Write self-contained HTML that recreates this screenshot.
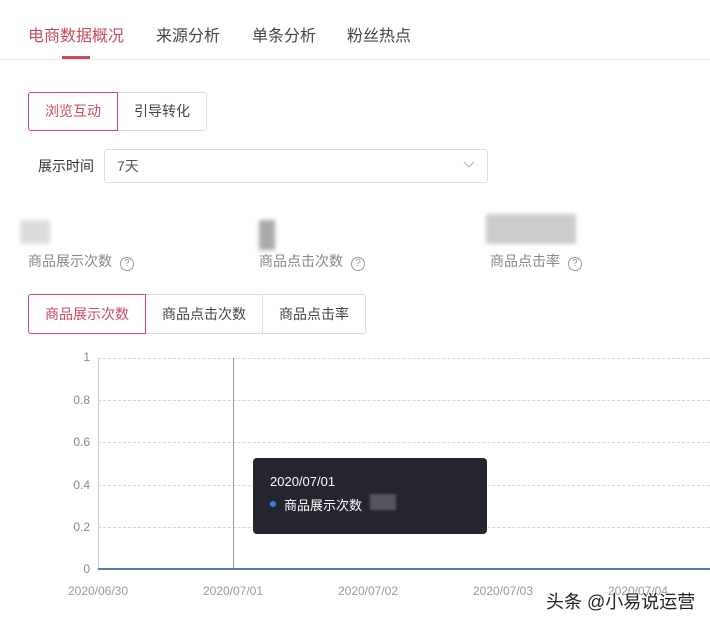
<!DOCTYPE html>
<html><head><meta charset="utf-8"><style>
*{margin:0;padding:0;box-sizing:border-box}
body{width:710px;height:624px;background:#fff;font-family:"Liberation Sans","Noto Sans CJK SC",sans-serif;position:relative;overflow:hidden;color:#333}
.a{position:absolute;white-space:nowrap}
.tab{font-size:16px;color:#444;top:22px}
.g{position:absolute;left:98px;width:612px;border-top:1px dashed #d6d6d6}
.yl{position:absolute;right:620px;font-size:12px;color:#888;text-align:right}
.xl{position:absolute;top:584px;font-size:12px;color:#999;transform:translateX(-50%)}
.q{display:inline-block;width:14px;height:14px;border:1px solid #999;border-radius:50%;font-size:10px;line-height:12px;text-align:center;color:#999;margin-left:8px;vertical-align:0px}
.blur{position:absolute;background:#ccc;filter:blur(2px)}
</style></head><body>
<div class="a tab" style="left:28px;color:#c94a5e">电商数据概况</div>
<div class="a tab" style="left:156px">来源分析</div>
<div class="a tab" style="left:252px">单条分析</div>
<div class="a tab" style="left:347px">粉丝热点</div>
<div class="a" style="left:62px;top:56px;width:28px;height:3px;background:#c94a5e"></div>
<div class="a" style="left:0;top:59px;width:710px;height:1px;background:#e6e6e6"></div>

<div class="a" style="left:28px;top:92px;width:90px;height:39px;border:1px solid #c94a5e;border-radius:3px 0 0 3px;color:#c94a5e;font-size:14px;line-height:37px;text-align:center;z-index:1">浏览互动</div>
<div class="a" style="left:117px;top:92px;width:90px;height:39px;border:1px solid #ddd;border-radius:0 3px 3px 0;font-size:14px;line-height:37px;text-align:center;color:#444">引导转化</div>

<div class="a" style="left:38px;top:156px;font-size:14px;color:#333">展示时间</div>
<div class="a" style="left:104px;top:149px;width:384px;height:34px;border:1px solid #ddd;border-radius:3px;font-size:14px;line-height:32px;padding-left:12px;color:#555">7天</div>
<svg class="a" style="left:463px;top:161px" width="12" height="8"><path d="M1 1l5 5 5-5" fill="none" stroke="#bbb" stroke-width="1.2"/></svg>

<div class="blur" style="left:20px;top:220px;width:30px;height:24px;background:#ddd"></div>
<div class="blur" style="left:259px;top:220px;width:16px;height:30px;background:#aaa"></div>
<div class="blur" style="left:486px;top:214px;width:90px;height:30px;background:#ccc"></div>
<div class="a" style="left:28px;top:251px;font-size:14px;color:#888">商品展示次数<span class="q">?</span></div>
<div class="a" style="left:259px;top:251px;font-size:14px;color:#888">商品点击次数<span class="q">?</span></div>
<div class="a" style="left:490px;top:251px;font-size:14px;color:#888">商品点击率<span class="q">?</span></div>

<div class="a" style="left:28px;top:294px;width:118px;height:40px;border:1px solid #c94a5e;border-radius:3px 0 0 3px;color:#c94a5e;font-size:14px;line-height:38px;text-align:center;z-index:1">商品展示次数</div>
<div class="a" style="left:145px;top:294px;width:118px;height:40px;border:1px solid #ddd;font-size:14px;line-height:38px;text-align:center;color:#444">商品点击次数</div>
<div class="a" style="left:262px;top:294px;width:104px;height:40px;border:1px solid #ddd;border-radius:0 3px 3px 0;font-size:14px;line-height:38px;text-align:center;color:#444">商品点击率</div>

<div class="g" style="top:358px"></div><div class="g" style="top:400px"></div><div class="g" style="top:442px"></div><div class="g" style="top:485px"></div><div class="g" style="top:527px"></div>
<div class="yl" style="top:350px">1</div><div class="yl" style="top:393px">0.8</div><div class="yl" style="top:435px">0.6</div><div class="yl" style="top:478px">0.4</div><div class="yl" style="top:520px">0.2</div><div class="yl" style="top:562px">0</div>
<div class="a" style="left:98px;top:358px;width:1px;height:212px;background:#ccc"></div>
<div class="a" style="left:233px;top:358px;width:1px;height:212px;background:#999"></div>
<div class="a" style="left:98px;top:568px;width:612px;height:2px;background:#4a7fb0"></div>
<div class="xl" style="left:98px">2020/06/30</div><div class="xl" style="left:233px">2020/07/01</div><div class="xl" style="left:368px">2020/07/02</div><div class="xl" style="left:503px">2020/07/03</div><div class="xl" style="left:638px">2020/07/04</div>

<div class="a" style="left:253px;top:458px;width:234px;height:76px;background:#25252f;border-radius:4px"></div>
<div class="a" style="left:270px;top:474px;font-size:13px;color:#fff">2020/07/01</div>
<div class="a" style="left:270px;top:501px;width:6px;height:6px;border-radius:50%;background:#3b82e0"></div>
<div class="a" style="left:284px;top:495px;font-size:13px;color:#fff">商品展示次数</div>
<div class="a" style="left:370px;top:494px;width:26px;height:16px;background:#55555e;filter:blur(1px)"></div>

<div class="a" style="left:546px;top:588px;font-size:18px;color:#222;text-shadow:0 0 2px #fff,0 0 2px #fff">头条 @小易说运营</div>
</body></html>
